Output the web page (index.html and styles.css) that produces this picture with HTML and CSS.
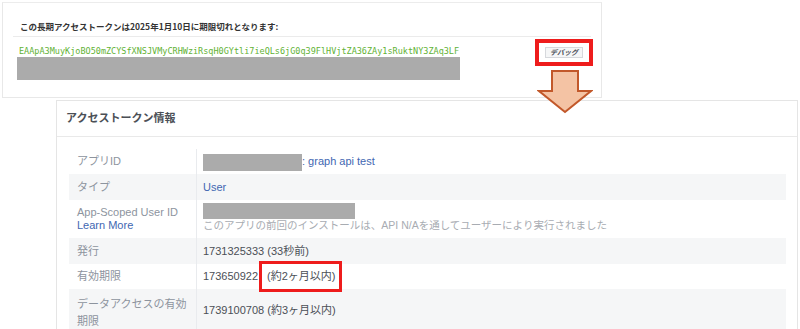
FILE: index.html
```html
<html><head><meta http-equiv="Content-Type" content="text/html; charset=UTF-8">
    <link rel="stylesheet" href="styles.css">
    <title>アクセストークンデバッガー</title>
</head>

<body>
    <div class="page">
        <div class="token-panel">
            <div class="token-head">この長期アクセストークンは2025年1月10日に期限切れとなります:</div>
            <div class="token-row">
                <div class="token-col">
                    <div class="token-text">EAApA3MuyKjoBO50mZCYSfXNSJVMyCRHWziRsqH0GYtli7ieQLs6jG0q39FlHVjtZA36ZAy1sRuktNY3ZAq3LF</div>
                    <div class="mask mask-token"></div>
                </div>
                <span class="highlight highlight-btn"><button class="debug-btn">デバッグ</button></span>
            </div>
        </div>

        <svg class="down-arrow" width="56" height="44" viewBox="0 0 56 44">
            <path d="M15 1 H41 V21 H54 L28 42 L2 21 H15 Z" fill="#f4c3a4" stroke="#c2582a" stroke-width="2" stroke-linejoin="miter"/>
        </svg>

        <div class="info-panel">
            <div class="info-head">アクセストークン情報</div>
            <div class="info-body">
                <div class="info-row">
                    <div class="info-label">アプリID</div>
                    <div class="info-value"><span class="mask mask-app"></span><a class="link">: graph api test</a></div>
                </div>
                <div class="info-row alt">
                    <div class="info-label">タイプ</div>
                    <div class="info-value"><a class="link">User</a></div>
                </div>
                <div class="info-row tall">
                    <div class="info-label">App-Scoped User ID<br><a class="link">Learn More</a></div>
                    <div class="info-value stack">
                        <span class="mask mask-user"></span>
                        <span class="muted">このアプリの前回のインストールは、API N/Aを通してユーザーにより実行されました</span>
                    </div>
                </div>
                <div class="info-row alt">
                    <div class="info-label">発行</div>
                    <div class="info-value">1731325333 (33秒前)</div>
                </div>
                <div class="info-row">
                    <div class="info-label">有効期限</div>
                    <div class="info-value">173650922 <span class="highlight highlight-exp">(約2ヶ月以内)</span></div>
                </div>
                <div class="info-row alt last">
                    <div class="info-label">データアクセスの有効<br>期限</div>
                    <div class="info-value">1739100708 (約3ヶ月以内)</div>
                </div>
            </div>
        </div>
    </div>
</body></html>
```

FILE: styles.css
```css
* {
    box-sizing: border-box;
}

body {
    margin: 0;
    background: #ffffff;
    font-family: "Liberation Sans", "Noto Sans CJK JP", sans-serif;
    overflow: hidden;
}

.page {
    position: relative;
    padding: 2px 0 0 2px;
}

/* top panel */

.token-panel {
    width: 600px;
    height: 96px;
    border: 1px solid #e8e8e8;
    border-top-color: #ececec;
    padding: 0 10px;
}

.token-head {
    height: 34px;
    padding: 18px 0 0 7px;
    border-bottom: 1px solid #ebebeb;
    font-size: 8.5px;
    font-weight: bold;
    color: #333333;
    line-height: 11px;
    font-family: "Noto Sans CJK JP", sans-serif;
}

.token-row {
    display: flex;
    justify-content: space-between;
    align-items: flex-start;
}

.token-col {
    margin: 9px 0 0 4px;
}

.token-text {
    padding-left: 2px;
    font-family: "DejaVu Sans Mono", monospace;
    font-size: 8.5px;
    line-height: 11px;
    color: #62b235;
}

.mask {
    display: block;
    background: #ababab;
}

.mask-token {
    width: 443px;
    height: 23px;
}

.highlight {
    display: inline-block;
    border: 3px solid #ee1c1c;
}

.highlight-btn {
    border-width: 4px;
    padding: 4px 6px;
    margin: 2px -2px 0 0;
}

.debug-btn {
    display: block;
    width: 38px;
    height: 11px;
    padding: 0;
    background: #f5f6f7;
    border: 1px solid #d6d8dc;
    font-family: "Noto Sans CJK JP", sans-serif;
    font-size: 7px;
    font-weight: bold;
    font-style: italic;
    line-height: 9px;
    color: #4b4f56;
}

.down-arrow {
    position: absolute;
    left: 537px;
    top: 70px;
}

/* info panel */

.info-panel {
    width: 742px;
    height: 240px;
    margin: 2px 0 0 54px;
    border: 1px solid #e5e5e5;
    border-bottom: none;
}

.info-head {
    height: 36px;
    padding: 9px 0 0 9px;
    border-bottom: 1px solid #e9e9e9;
    font-family: "Noto Sans CJK JP", sans-serif;
    font-size: 11px;
    font-weight: bold;
    line-height: 14px;
    color: #4b4f56;
}

.info-body {
    padding: 12px 11px 0 12px;
}

.info-row {
    display: grid;
    grid-template-columns: 127px 1fr;
    height: 25px;
    font-size: 11px;
    line-height: 13px;
}

.info-row.alt {
    height: 26px;
    background: #f5f6f7;
}

.info-row.tall {
    height: 38px;
}

.info-row.last {
    height: 44px;
}

.info-label {
    display: flex;
    flex-direction: column;
    justify-content: center;
    padding-left: 8px;
    color: #8d949e;
}

.info-row.last .info-label {
    display: block;
    padding-top: 7px;
    line-height: 17px;
}

.info-row.last .info-value {
    align-items: flex-start;
    padding-top: 15px;
}

.info-value {
    display: flex;
    align-items: center;
    padding-left: 6px;
    border-left: 1px solid #e9ebee;
    color: #4b4f56;
    white-space: nowrap;
}

.info-value.stack {
    flex-direction: column;
    align-items: flex-start;
    justify-content: flex-start;
    padding-top: 3px;
}

.link {
    color: #4267b2;
}

.muted {
    color: #a8acb2;
    font-size: 10.5px;
}

.mask-app {
    width: 99px;
    height: 17px;
    margin-top: 1px;
}

.mask-user {
    width: 152px;
    height: 16px;
}

.highlight-exp {
    margin: -3px 0 -3px 1px;
    padding: 6px 3px 6px 5px;
}
```
